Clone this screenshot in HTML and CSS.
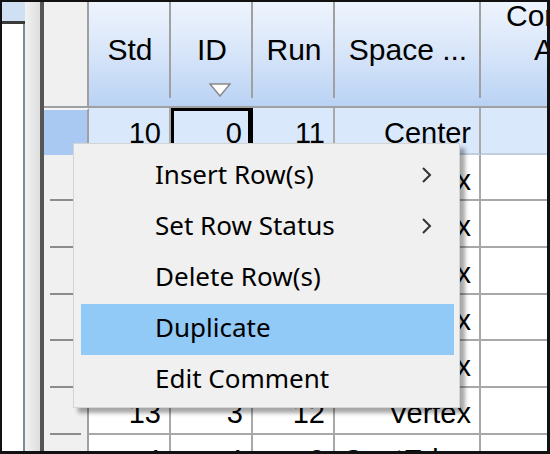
FILE: index.html
```html
<!DOCTYPE html>
<html lang="en">
<head>
    <meta charset="UTF-8">
    <title>Design Grid</title>
    <link rel="stylesheet" href="styles.css">
</head>
<body>
    <div class="frame">
        <div class="side">
            <div class="side-top"></div>
            <div class="side-box"></div>
        </div>
        <div class="strip"></div>

        <div class="grid">
            <div class="hcell corner"></div>
            <div class="hcell"><span>Std</span></div>
            <div class="hcell"><span>ID</span>
                <svg class="sort" width="22" height="14" viewBox="0 0 22 14"><polygon points="1,1 21,1 11,13" fill="#fff" stroke="#8a8a8a" stroke-width="1.5"/></svg>
            </div>
            <div class="hcell"><span>Run</span></div>
            <div class="hcell"><span>Space ...</span></div>
            <div class="hcell wide"><span class="l1">Constraint</span><span class="l2">Actual</span></div>

            <div class="rh sel"></div>
            <div class="cell sel">10</div>
            <div class="cell sel focus">0</div>
            <div class="cell sel">11</div>
            <div class="cell sel">Center</div>
            <div class="cell sel"></div>

            <div class="rh"></div><div class="cell">5</div><div class="cell">1</div><div class="cell">3</div><div class="cell">Vertex</div><div class="cell"></div>
            <div class="rh"></div><div class="cell">2</div><div class="cell">2</div><div class="cell">7</div><div class="cell">Vertex</div><div class="cell"></div>
            <div class="rh"></div><div class="cell">8</div><div class="cell">3</div><div class="cell">1</div><div class="cell">Vertex</div><div class="cell"></div>
            <div class="rh"></div><div class="cell">1</div><div class="cell">6</div><div class="cell">4</div><div class="cell">Vertex</div><div class="cell"></div>
            <div class="rh"></div><div class="cell">11</div><div class="cell">2</div><div class="cell">8</div><div class="cell">Vertex</div><div class="cell"></div>
            <div class="rh"></div><div class="cell">13</div><div class="cell">3</div><div class="cell">12</div><div class="cell">Vertex</div><div class="cell"></div>
            <div class="rh"></div><div class="cell">4</div><div class="cell">4</div><div class="cell">9</div><div class="cell">CentEdge</div><div class="cell"></div>
        </div>

        <div class="menu">
            <div class="item"><span>Insert Row(s)</span>
                <svg class="arrow" width="10" height="16" viewBox="0 0 10 16"><polyline points="1,1 8,8 1,15" fill="none" stroke="#333" stroke-width="2"/></svg>
            </div>
            <div class="item"><span>Set Row Status</span>
                <svg class="arrow" width="10" height="16" viewBox="0 0 10 16"><polyline points="1,1 8,8 1,15" fill="none" stroke="#333" stroke-width="2"/></svg>
            </div>
            <div class="item"><span>Delete Row(s)</span></div>
            <div class="item hot"><span>Duplicate</span></div>
            <div class="item"><span>Edit Comment</span></div>
        </div>
    </div>
</body>
</html>
```

FILE: styles.css
```css
body {
    margin: 0;
    padding: 0;
    background: #fff;
}

.frame {
    position: relative;
    width: 550px;
    height: 454px;
    box-sizing: border-box;
    border-style: solid;
    border-color: #111;
    border-width: 2px 3px 3px 2px;
    display: flex;
    overflow: hidden;
    background: #fff;
    font-family: "Liberation Sans", Arial, sans-serif;
}

.side {
    width: 23px;
    display: flex;
    flex-direction: column;
    flex-shrink: 0;
}

.side-top {
    height: 19px;
    background: #cfe0f2;
    border-bottom: 3px solid #3a3a3a;
}

.side-box {
    flex: 1;
    background: #fff;
    border-right: 2px solid #7f8a9a;
}

.strip {
    width: 15px;
    flex-shrink: 0;
    background: linear-gradient(to right, #f2f2f2, #dedede);
    border-right: 4px solid #555;
}

.grid {
    display: grid;
    grid-template-columns: 45px 82px 82px 82px 146px 160px;
    grid-template-rows: 106px repeat(8, 46.7px);
    flex-shrink: 0;
}

.hcell {
    display: flex;
    flex-direction: column;
    align-items: center;
    padding-top: 31px;
    box-sizing: border-box;
    font-size: 30px;
    color: #000;
    border-bottom: 2px solid #a0a0a0;
    background:
        linear-gradient(#a0a0a0, #a0a0a0) right top / 2px calc(100% - 8px) no-repeat,
        linear-gradient(#eef4fd, #d7e5f9 50%, #b9d2f4);
}

.hcell.corner {
    background: #f0f0f0;
    border-right: 2px solid #a0a0a0;
}

.hcell .sort {
    margin-top: 16px;
    margin-left: 16px;
}

.hcell.wide {
    align-items: flex-start;
    padding-top: 0;
    line-height: 34px;
    background: linear-gradient(#eef4fd, #d7e5f9 50%, #b9d2f4);
}

.hcell.wide .l1 {
    margin-top: -3px;
    padding-left: 25px;
}

.hcell.wide .l2 {
    padding-left: 53px;
}

.rh {
    background:
        linear-gradient(#8c8c8c, #8c8c8c) center bottom / 31px 2px no-repeat,
        #f0f0f0;
    border-right: 2px solid #a0a0a0;
}

.rh.sel {
    background: #aac9f2;
    border-top: 2px solid #f4f4f4;
}

.cell {
    box-sizing: border-box;
    border-right: 2px solid #a8a8a8;
    border-bottom: 2px solid #a8a8a8;
    background: #fff;
    font-size: 29px;
    color: #000;
    text-align: right;
    padding: 9px 8px 0 0;
    white-space: nowrap;
    overflow: hidden;
}

.cell.sel {
    background: #dae8fb;
    border-bottom-color: #c0cee0;
}

.cell.focus {
    box-shadow: inset 3px 3px 0 #000, inset -2px 0 0 #000;
    border-right: 3px solid #000;
}

.menu {
    position: absolute;
    left: 71px;
    top: 141px;
    width: 387px;
    height: 265px;
    box-sizing: border-box;
    padding: 7px 5px 3px 7px;
    background: #f0f0f0;
    border: 1px solid #d4d4d4;
    box-shadow: 5px 5px 4px rgba(0, 0, 0, 0.35);
    font-family: "Noto Sans", "Open Sans", sans-serif;
    font-size: 26px;
    color: #000;
}

.item {
    height: 51px;
    display: flex;
    align-items: center;
    padding-left: 74px;
    box-sizing: border-box;
}

.item span {
    margin-top: -5px;
}

.item .arrow {
    margin-left: auto;
    margin-right: 22px;
    margin-top: -4px;
}

.item.hot {
    background: #91c9f7;
}
```
